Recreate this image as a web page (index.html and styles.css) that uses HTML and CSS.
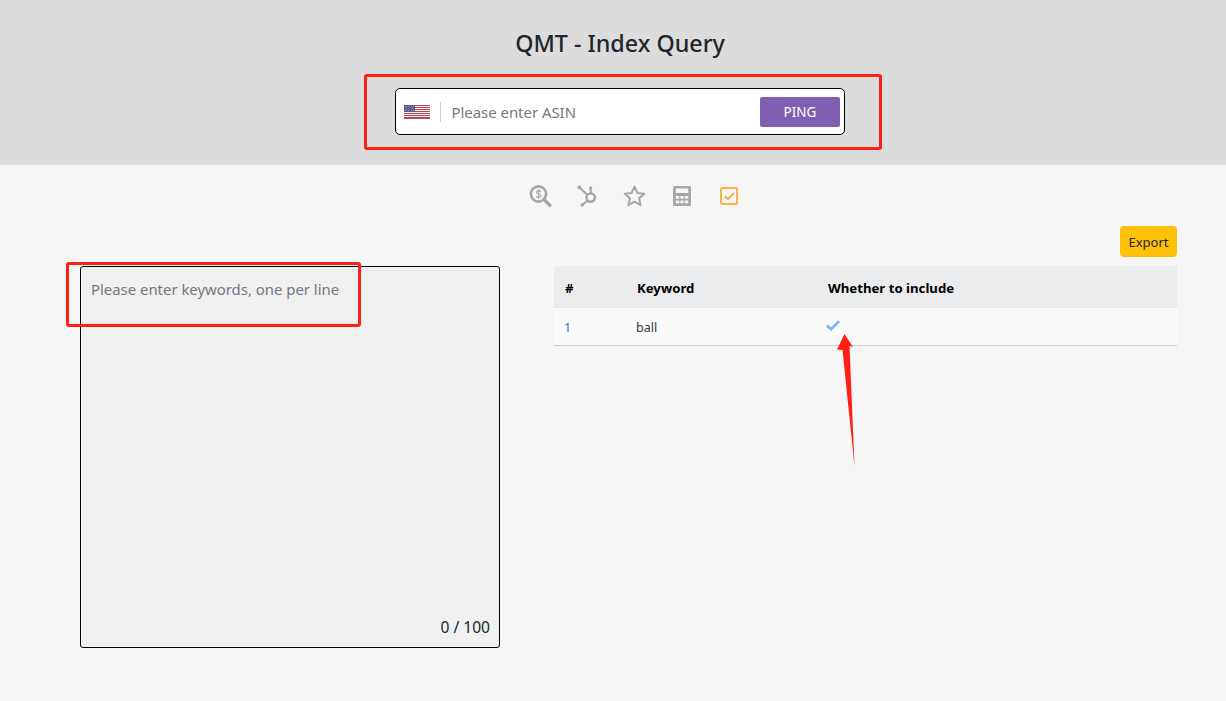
FILE: index.html
```html
<!DOCTYPE html>
<html lang="en">
<head>
<meta charset="utf-8">
<title>QMT - Index Query</title>
<link rel="stylesheet" href="styles.css">
</head>
<body>
<header class="hero">
  <h1 class="hero-title">QMT - Index Query</h1>
  <form class="search">
    <svg class="flag" width="26" height="14" viewBox="0 0 26 14">
      <rect width="26" height="14" fill="#f4f0f2"/>
      <g fill="#b5475c">
        <rect y="0" width="26" height="1"/><rect y="2" width="26" height="1"/><rect y="4" width="26" height="1"/><rect y="6" width="26" height="1"/><rect y="8" width="26" height="1"/><rect y="10" width="26" height="1"/><rect y="12" width="26" height="2"/>
      </g>
      <rect width="11" height="7" fill="#5b5c8a"/>
      <g fill="#9a9ac0">
        <rect x="1" y="1" width="1" height="1"/><rect x="4" y="1" width="1" height="1"/><rect x="7" y="1" width="1" height="1"/><rect x="9" y="1" width="1" height="1"/><rect x="2" y="3" width="1" height="1"/><rect x="5" y="3" width="1" height="1"/><rect x="8" y="3" width="1" height="1"/><rect x="1" y="5" width="1" height="1"/><rect x="4" y="5" width="1" height="1"/><rect x="7" y="5" width="1" height="1"/><rect x="9" y="5" width="1" height="1"/>
      </g>
    </svg>
    <span class="search-divider"></span>
    <input class="search-input" type="text" placeholder="Please enter ASIN">
    <button class="ping" type="button">PING</button>
  </form>
</header>

<nav class="tools">
  <svg class="tool" width="24" height="24" viewBox="0 0 24 24" fill="none" stroke="#a6a6a6">
    <circle cx="10.500" cy="10" r="7.600" stroke-width="2.600"/>
    <path d="M16.300 15.800 21.900 21.400" stroke-width="3.400" stroke-linecap="round"/>
    <path d="M12.900 7.600C12.300 6.600 8.500 6.400 8.500 8.400s4.600 1.300 4.600 3.400-4.100 1.900-5 .6M10.700 5.200v9.600" stroke-width="1.100"/>
  </svg>
  <svg class="tool" width="24" height="24" viewBox="0 0 24 24" fill="none" stroke="#a6a6a6" stroke-width="2">
    <circle cx="15.700" cy="13.600" r="4.200" stroke-width="2.400"/>
    <path d="M4.500 3.600 12.300 10.800M15.700 9.400V4.500M12.500 16.800 7.900 20.400" />
    <circle cx="4.300" cy="3.400" r="1.800" fill="#a6a6a6" stroke="none"/>
    <circle cx="15.700" cy="3.800" r="1.500" fill="#a6a6a6" stroke="none"/>
    <circle cx="7.100" cy="21" r="1.700" fill="#a6a6a6" stroke="none"/>
  </svg>
  <svg class="tool" width="24" height="24" viewBox="0 0 24 24" fill="none" stroke="#a6a6a6" stroke-width="2" stroke-linejoin="round">
    <path d="M11.500 2.600 14.400 9 21.300 9.700 16.100 14.300 17.600 21.200 11.500 17.600 5.400 21.200 6.900 14.300 1.700 9.700 8.600 9Z"/>
  </svg>
  <svg class="tool" width="24" height="24" viewBox="0 0 24 24">
    <path fill="#a6a6a6" fill-rule="evenodd" d="M4.500 2h15A1.500 1.500 0 0 1 21 3.500v17a1.500 1.500 0 0 1-1.500 1.500h-15A1.500 1.500 0 0 1 3 20.500v-17A1.500 1.500 0 0 1 4.500 2Zm1.300 2.500v4.500h12.400V4.500ZM5.800 12v2.800h3.400V12Zm4.500 0v2.800h3.400V12Zm4.500 0v2.800h3.400V12ZM5.800 16.500v2.800h3.400v-2.800Zm4.500 0v2.800h3.400v-2.800Zm4.500 0v2.800h3.400v-2.800Z"/>
  </svg>
  <svg class="tool" width="24" height="24" viewBox="0 0 24 24" fill="none" stroke="#fbb04f">
    <rect x="3" y="4" width="16" height="16" rx="1.200" stroke-width="2"/>
    <path d="M6.800 12.200 10 15.200 15.800 9" stroke-width="2.200"/>
  </svg>
</nav>

<main class="content">
  <section class="left">
    <div class="keywords">
      <textarea class="keywords-input" placeholder="Please enter keywords, one per line"></textarea>
      <span class="keywords-count">0 / 100</span>
    </div>
  </section>
  <section class="right">
    <div class="actions"><button class="export" type="button">Export</button></div>
    <table class="results">
      <thead>
        <tr><th class="col-num">#</th><th class="col-key">Keyword</th><th>Whether to include</th></tr>
      </thead>
      <tbody>
        <tr>
          <td class="num">1</td>
          <td class="keyword">ball</td>
          <td>
            <svg class="check" width="14" height="11" viewBox="0 0 14 11" fill="none" stroke="#77b6f8" stroke-width="2.600"><path d="M.8 5.500 5 9.200 13.200 1.200"/></svg>
          </td>
        </tr>
      </tbody>
    </table>
  </section>
</main>

<div class="mark mark-search"></div>
<div class="mark mark-keywords"></div>
<svg class="arrow" width="24" height="134" viewBox="0 0 24 134">
  <path fill="#ff1f14" d="M10.500 1 19 14 15.500 13 20.500 133 8.500 17 3 16.500Z"/>
</svg>
</body>
</html>
```
FILE: styles.css
```css
* { box-sizing: border-box; }
html, body { margin: 0; padding: 0; }
body {
  width: 1226px;
  height: 701px;
  overflow: hidden;
  position: relative;
  background: #f6f6f6;
  font-family: "Noto Sans", "Open Sans", sans-serif;
  color: #212529;
}
.hero {
  height: 165px;
  background: #dcdcdc;
  padding: 27px 0 0 14px;
  display: flex;
  flex-direction: column;
  align-items: center;
}
.hero-title {
  margin: 0;
  font-size: 23.300px;
  line-height: 32px;
  font-weight: 500;
  color: #212529;
}
.search {
  margin-top: 29px;
  width: 450px;
  height: 47px;
  background: #fff;
  border: 1px solid #000;
  border-radius: 5px;
  display: flex;
  align-items: center;
  padding: 0 4px 0 8px;
}
.flag { flex: none; }
.search-divider {
  width: 1px;
  height: 20px;
  margin: 0 10.500px 0 10px;
  background: #d0d0d0;
  flex: none;
}
.search-input {
  flex: 1;
  min-width: 0;
  border: 0;
  outline: 0;
  background: transparent;
  padding: 0;
  font: 400 14.900px "Noto Sans", "Open Sans", sans-serif;
  color: #212529;
}
.search-input::placeholder, .keywords-input::placeholder { color: #74787f; opacity: 1; }
.ping {
  width: 80px;
  height: 30px;
  border: 0;
  border-radius: 2px;
  background: #7e5fb2;
  color: #fff;
  font: 400 13.500px "Noto Sans", "Open Sans", sans-serif;
  padding: 0;
}
.tools {
  margin-top: 19px;
  margin-left: 527.500px;
  height: 24px;
  display: flex;
  gap: 23.500px;
}
.tool { flex: none; }
.content {
  display: flex;
  align-items: flex-start;
  margin-top: 18px;
  padding-left: 80px;
}
.left { width: 420px; padding-top: 40px; }
.keywords {
  position: relative;
  height: 382px;
  background: #f0f0f0;
  border: 1px solid #000;
  border-radius: 3px;
}
.keywords-input {
  display: block;
  width: 100%;
  height: 100%;
  border: 0;
  outline: 0;
  resize: none;
  background: transparent;
  padding: 11px 10px;
  font: 400 14.900px/22px "Noto Sans", "Open Sans", sans-serif;
}
.keywords-count {
  position: absolute;
  right: 9px;
  bottom: 10px;
  font-size: 15.600px;
  line-height: 20px;
  color: #212529;
}
.right { width: 623px; margin-left: 54px; }
.actions { display: flex; justify-content: flex-end; height: 40px; }
.export {
  width: 57px;
  height: 31px;
  border: 0;
  border-radius: 4px;
  background: #ffc107;
  color: #212529;
  font: 400 13px "Noto Sans", "Open Sans", sans-serif;
  padding: 0;
}
.results { width: 100%; border-collapse: collapse; table-layout: fixed; }
.results th {
  height: 41px;
  padding: 3px 0 0 10px;
  background: #ebecee;
  text-align: left;
  font-size: 13.200px;
  font-weight: 700;
  color: #000;
  border-bottom: 1px solid #e6e9ec;
}
.results th:first-child { padding-left: 11px; }
.col-num { width: 73px; }
.col-key { width: 191px; }
.results td {
  height: 38px;
  padding: 2px 0 0 10px;
  background: #fafafa;
  font-size: 12.500px;
  color: #343a40;
  border-bottom: 1px solid #cfcfcf;
}
.results td.keyword { padding-left: 9px; }
.results td.num { color: #1f6fb5; }
.check { display: block; margin-top: -4px; margin-left: -2px; }
.mark {
  position: absolute;
  border: 3px solid #ff1f14;
  border-radius: 3px;
}
.mark-search { left: 364px; top: 74px; width: 518px; height: 76px; }
.mark-keywords { left: 66px; top: 262px; width: 295px; height: 65px; }
.arrow { position: absolute; left: 834px; top: 333px; }
```
